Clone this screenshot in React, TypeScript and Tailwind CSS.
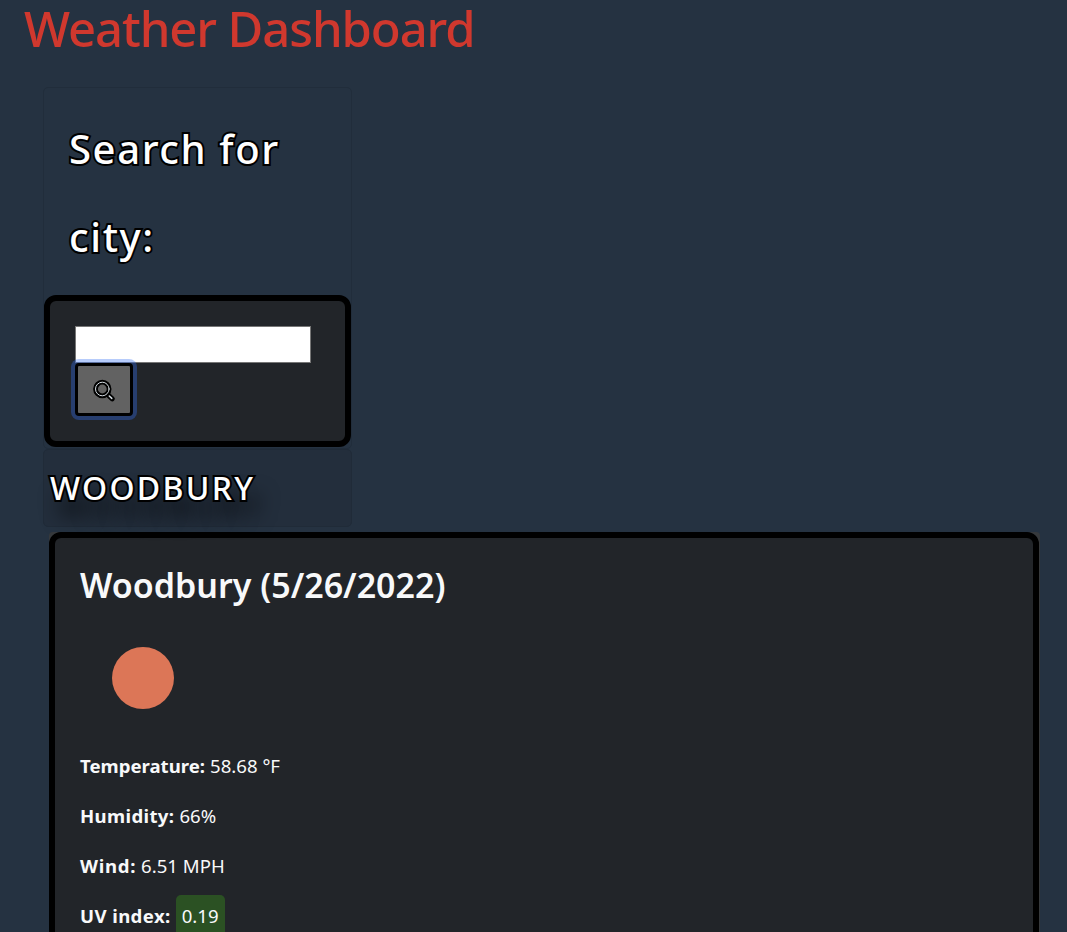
import React from "react";

function SearchIcon() {
  return (
    <svg width="26" height="26" viewBox="0 0 26 26" fill="none" strokeLinecap="round">
      <circle cx="11.3" cy="12" r="6.8" stroke="#000" strokeWidth="4.8" />
      <path d="M17 17.9 21.3 21.9" stroke="#000" strokeWidth="5" />
      <circle cx="11.3" cy="12" r="6.8" stroke="#d4dce2" strokeWidth="1" />
      <path d="M18.3 19 20.8 21.4" stroke="#d4dce2" strokeWidth="1.5" />
    </svg>
  );
}

type StatProps = { label: string; spacing?: string; children: React.ReactNode };

function Stat({ label, spacing = "tracking-[0.35px]", children }: StatProps) {
  return (
    <p className="flex h-[50px] items-center gap-[5px] whitespace-nowrap text-[18.6px] leading-[50px]">
      <strong className={`font-bold ${spacing}`}>{label}</strong>
      {children}
    </p>
  );
}

export default function App() {
  return (
    <div className="h-[932px] overflow-hidden bg-[#253241] font-['Noto_Sans',sans-serif] text-[#f8f9fa]">
      <h1 className="h-[87px] whitespace-nowrap pl-[24px] text-[49px] leading-[57px] font-medium tracking-[-1.1px] text-[#d0382e]">
        Weather Dashboard
      </h1>

      <aside className="ml-[43px] w-[309px]">
        <div className="rounded-[5px] border border-[#212d3b] pb-px">
          <h2 className="h-[207px] px-[25px] pt-[17px] text-[40px] leading-[88px] font-medium tracking-[1.6px] text-white [-webkit-text-stroke:4px_black] [paint-order:stroke_fill]">
            Search for
            <br />
            city:
          </h2>
          <form className="h-[152px] rounded-xl border-6 border-black bg-[#222529] pt-[25px] pl-[25px]">
            <input
              aria-label="City"
              className="block h-[37px] w-[236px] border border-[#767676] bg-white px-2 text-black outline-none"
            />
            <button
              type="button"
              aria-label="Search"
              className="relative flex h-[53px] w-[58px] items-center justify-center rounded-[4px] border-3 border-black bg-[#626262] shadow-[0_0_0_4px_rgba(49,110,244,0.35)]"
            >
              <SearchIcon />
            </button>
          </form>
        </div>
        <div className="h-[78px] rounded-[5px] border border-[#202b38] bg-[#232e3c]">
          <h3 className="pl-[6px] text-[32px] leading-[76px] font-medium tracking-[2.3px] text-white [-webkit-text-stroke:4px_black] [paint-order:stroke_fill] [text-shadow:8px_18px_20px_rgba(0,0,0,0.9)]">
            WOODBURY
          </h3>
        </div>
      </aside>

      <main className="mt-[5px] ml-[49px] w-[991px] rounded-[4px] bg-[#36393c] pr-px">
        <section className="h-[500px] rounded-xl border-6 border-black bg-[#222529] pt-[24px] pl-[25px]">
          <h2 className="h-[85px] whitespace-nowrap text-[34px] leading-[46px] font-semibold">
            Woodbury (5/26/2022)
          </h2>
          <div className="h-[94px] pl-[32px]">
            <div className="size-[62px] rounded-full bg-[#dc7657]" />
          </div>
          <Stat label="Temperature:" spacing="tracking-normal">58.68 °F</Stat>
          <Stat label="Humidity:">66%</Stat>
          <Stat label="Wind:" spacing="tracking-[0.7px]">6.51 MPH</Stat>
          <Stat label="UV index:" spacing="tracking-[0.4px]">
            <span className="flex h-[42px] w-[49px] items-center justify-center rounded-[5px] bg-[#2b5123]">
              0.19
            </span>
          </Stat>
        </section>
      </main>
    </div>
  );
}
